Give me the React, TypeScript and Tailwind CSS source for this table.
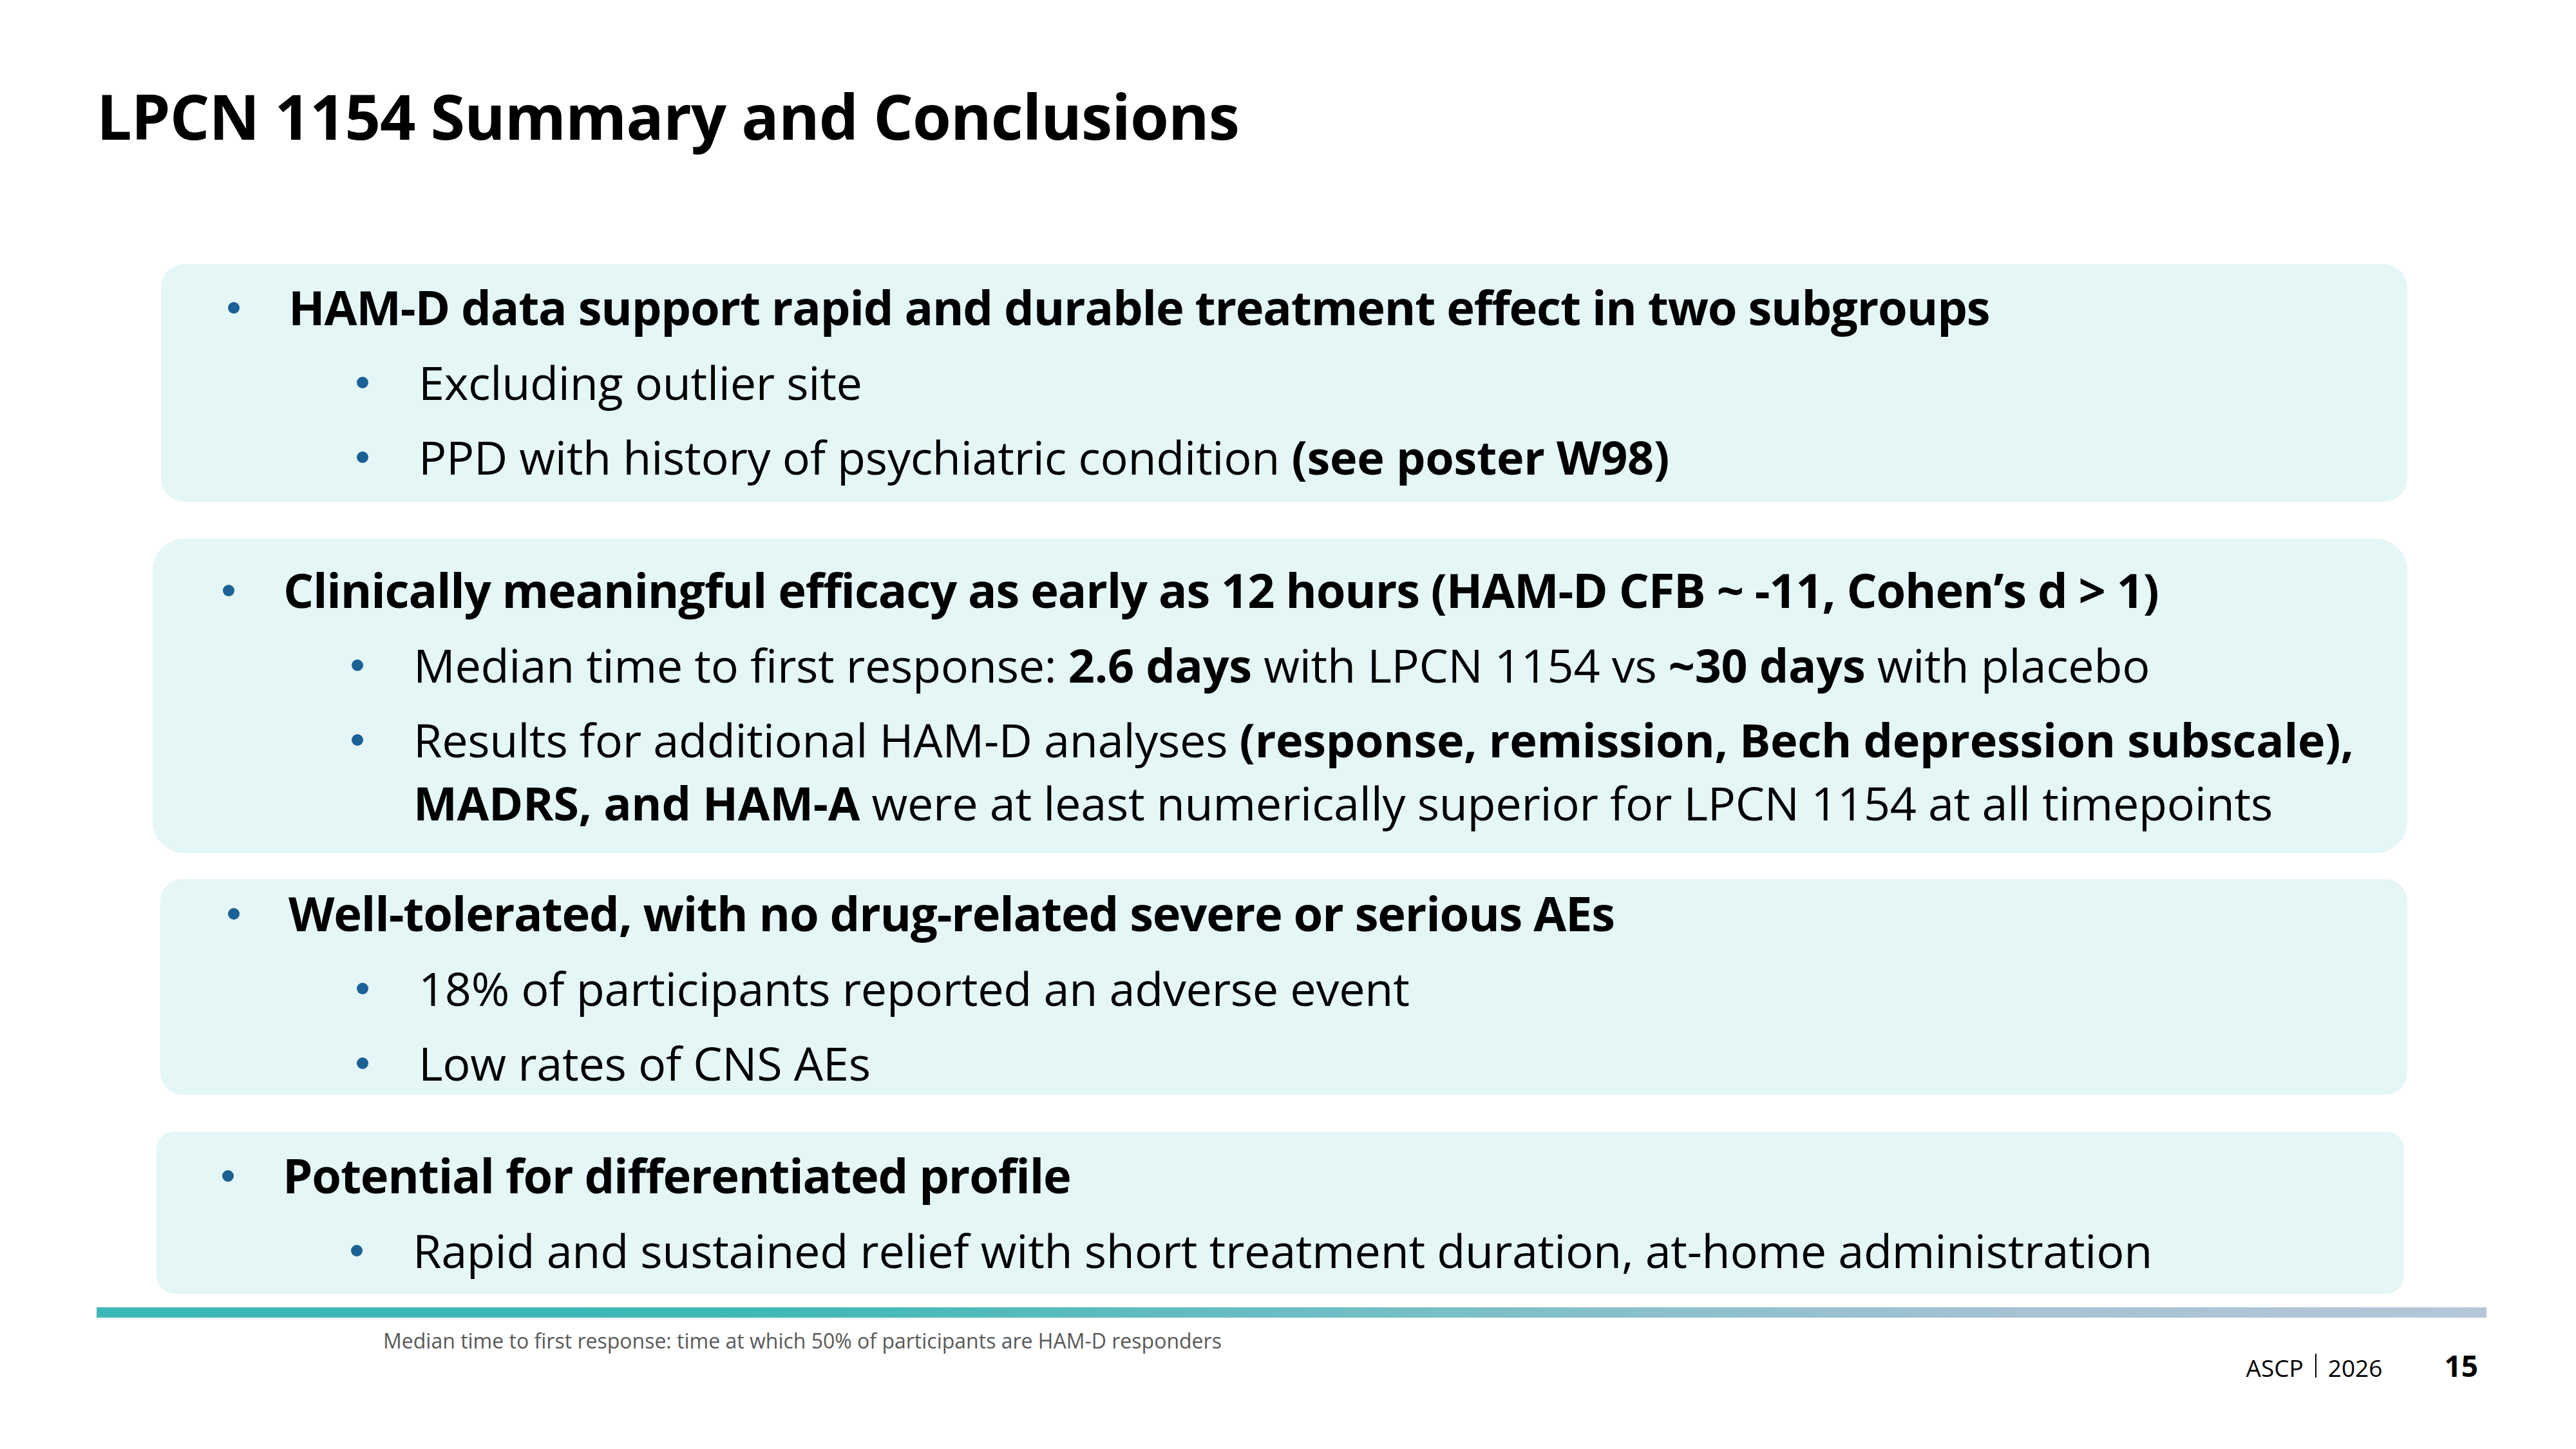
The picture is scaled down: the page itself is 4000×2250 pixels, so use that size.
import type { ReactNode } from 'react'

function Dot() {
    return <span className="mt-[41px] h-[18px] w-[18px] shrink-0 rounded-full bg-[#1b6196]" />
}

function Head({ children }: { children: ReactNode }) {
    return (
        <div className="flex items-start">
            <Dot />
            <p className="ml-[76px] whitespace-nowrap text-[74px] font-bold leading-[98px] tracking-[-1.2px]">{children}</p>
        </div>
    )
}

function Sub({ children }: { children: ReactNode }) {
    return (
        <div className="mt-[18px] ml-[200px] flex items-start">
            <Dot />
            <p className="ml-[78px] whitespace-nowrap text-[72px] leading-[98px] tracking-[-0.3px]">{children}</p>
        </div>
    )
}

export default function App() {
    return (
        <div className="h-[2250px] w-[4000px] overflow-hidden bg-white font-['Open_Sans',sans-serif] text-black">
            <h1 className="pt-[131px] pl-[150px] text-[97px] font-bold leading-none tracking-[-1px]">
                LPCN 1154 Summary and Conclusions
            </h1>

            {/* box 1 */}
            <div className="mt-[182px] ml-[250px] w-[3488px] rounded-[36px] bg-[#e4f6f5] pt-[18px] pb-[21px] pl-[104px]">
                <Head>HAM-D data support rapid and durable treatment effect in two subgroups</Head>
                <Sub>Excluding outlier site</Sub>
                <Sub>
                    PPD with history of psychiatric condition <b>(see poster W98)</b>
                </Sub>
            </div>

            {/* box 2 */}
            <div className="mt-[57px] ml-[237px] w-[3501px] rounded-[50px] bg-[#e4f6f5] pt-[31px] pb-[30px] pl-[109px]">
                <Head>Clinically meaningful efficacy as early as 12 hours (HAM-D CFB ~ -11, Cohen’s d &gt; 1)</Head>
                <Sub>
                    Median time to first response: <b>2.6 days</b> with LPCN 1154 vs <b>~30 days</b> with placebo
                </Sub>
                <Sub>
                    Results for additional HAM-D analyses <b>(response, remission, Bech depression subscale),</b>
                    <br />
                    <b>MADRS, and HAM-A</b> were at least numerically superior for LPCN 1154 at all timepoints
                </Sub>
            </div>

            {/* box 3 */}
            <div className="mt-[40px] ml-[249px] w-[3489px] rounded-[34px] bg-[#e4f6f5] pt-[4px] pb-[1px] pl-[105px]">
                <Head>Well-tolerated, with no drug-related severe or serious AEs</Head>
                <Sub>18% of participants reported an adverse event</Sub>
                <Sub>Low rates of CNS AEs</Sub>
            </div>

            {/* box 4 */}
            <div className="mt-[57px] ml-[243px] w-[3490px] rounded-[28px] bg-[#e4f6f5] pt-[19px] pb-[19px] pl-[102px]">
                <Head>Potential for differentiated profile</Head>
                <Sub>Rapid and sustained relief with short treatment duration, at-home administration</Sub>
            </div>

            <div className="mt-[21px] ml-[150px] h-[16px] w-[3711px] bg-[linear-gradient(90deg,#3cb8b6_0%,#3fb8b6_28%,#7cbfc8_58%,#a5c2d3_80%,#b5c6d9_100%)]" />

            <div className="ml-[150px] flex w-[3711px] items-start">
                <p className="mt-[20px] ml-[445px] text-[32px] leading-none text-[#595959]">
                    Median time to first response: time at which 50% of participants are HAM-D responders
                </p>
                <div className="mt-[51px] mr-[13px] ml-auto flex items-baseline">
                    <span className="text-[37px] leading-none">ASCP</span>
                    <span className="mx-[18px] h-[37px] w-[2px] self-center bg-black" />
                    <span className="text-[37px] leading-none">2026</span>
                    <span className="ml-[96px] text-[46px] font-bold leading-none">15</span>
                </div>
            </div>
        </div>
    )
}
